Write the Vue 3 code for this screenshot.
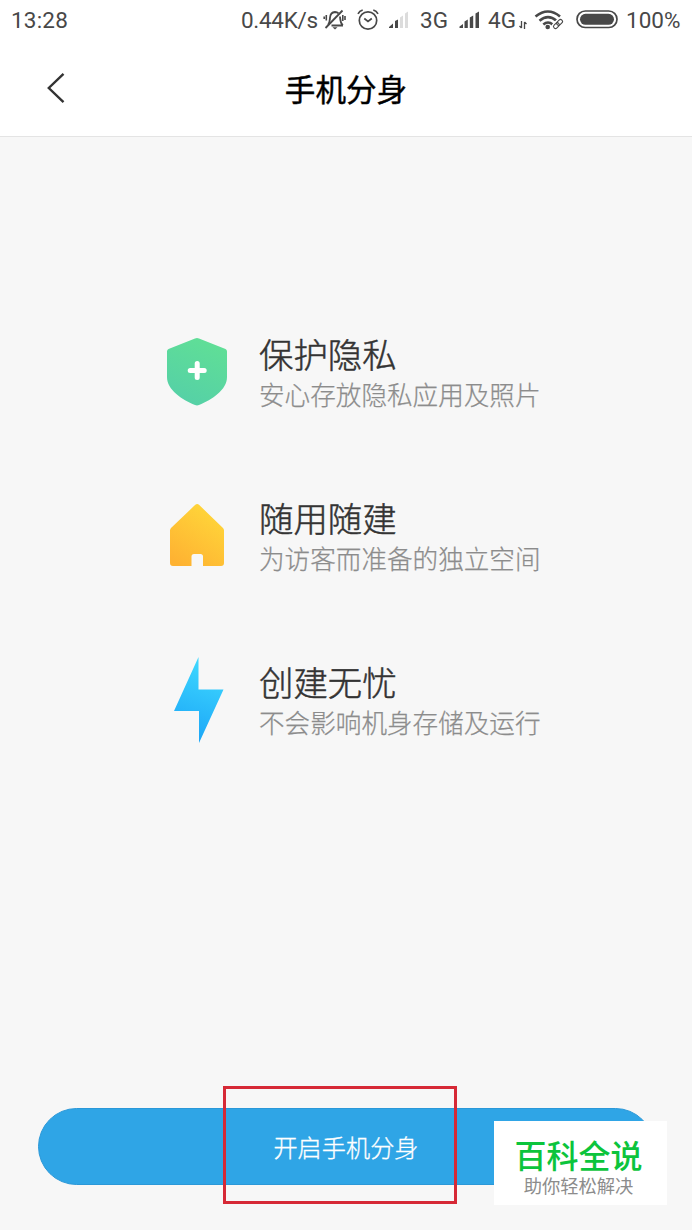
<script setup>
const features = [
  { icon: 'shield', title: '保护隐私', note: '安心存放隐私应用及照片' },
  { icon: 'house', title: '随用随建', note: '为访客而准备的独立空间' },
  { icon: 'bolt', title: '创建无忧', note: '不会影响机身存储及运行' },
]
</script>

<template>
  <main class="screen">
    <div class="status">
      <span class="clock">13:28</span>
      <span class="speed">0.44K/s</span>
      <svg class="glyph" width="24" height="22" viewBox="0 0 24 22" fill="none" stroke="#484848" stroke-width="1.8">
        <path d="M5 15.8C7 14 6.700 11 7 8.500C7.300 5.500 9 3.300 12 3c1.500 0 2.700.500 3.500 1.300M17 7.500c.3 3 0 6 2.800 8.800M8.500 16.500H20" />
        <path d="M19.500 1.500 2.500 19" />
        <path d="M3.300 6v5.500M1.200 7.500v2.500M19.800 6v6M22 7v4" stroke-width="1.600" />
        <path d="M9.500 18.300h5l-2.500 2.200z" fill="#484848" stroke="none" />
      </svg>
      <svg class="glyph" width="22" height="22" viewBox="0 0 22 22" fill="none" stroke="#484848" stroke-width="1.700">
        <circle cx="11" cy="11.500" r="8.700" />
        <path d="m7.300 9.500 3.700 3 3.800-3" />
        <path d="M1 4.800Q2.500 2 5.700 1M21 4.800Q19.500 2 16.300 1" />
      </svg>
      <svg class="glyph" width="22" height="20" viewBox="0 0 22 20">
        <path d="M1 17 5 13.500v4.500H1zM7 11l3-1.500V18H7z" fill="#484848" />
        <path d="M12 7.500 15 5.500V18h-3zM17 3.500 20 1.500V18h-3z" fill="#dcdcdc" />
      </svg>
      <span>3G</span>
      <svg class="glyph" width="22" height="20" viewBox="0 0 22 20">
        <path d="M.5 16.500 4 14v4H.5zM5.500 11.500l3.300-2V18H5.500zM10.800 7.500l3.400-2V18h-3.400zM16.500 3.500l3.500-2V18h-3.500z" fill="#484848" />
      </svg>
      <span>4G</span>
      <svg class="glyph arrows" width="8" height="8" viewBox="0 0 8 8" fill="none" stroke="#484848" stroke-width="1.300">
        <path d="M2.500 0v7M.5 5l2 2M5.500 8V1M5.500 1l2 2" />
      </svg>
      <svg class="glyph" width="30" height="22" viewBox="0 0 30 22" fill="none" stroke="#484848">
        <path d="M1.500 7.500Q14 -2.500 26 7.500M5.500 11.700Q14 4.700 22.500 11.700M9.300 15.500Q14 11.500 18.700 15.500" stroke-width="2.600" />
        <circle cx="13.700" cy="18" r="2.300" fill="#484848" stroke="none" />
        <g transform="rotate(-45 24 15)">
          <rect x="18.500" y="12.500" width="11" height="5" rx="2.500" stroke="#fff" stroke-width="3" />
          <rect x="18.500" y="13" width="6.500" height="4" rx="2" stroke-width="1.100" />
          <rect x="23" y="13" width="6.500" height="4" rx="2" stroke-width="1.100" />
        </g>
      </svg>
      <svg class="glyph" width="42" height="20" viewBox="0 0 42 20">
        <rect x="1" y="1" width="40" height="16.500" rx="8.250" fill="none" stroke="#484848" stroke-width="1.700" />
        <rect x="4" y="3.800" width="34" height="11" rx="5.500" fill="#484848" />
      </svg>
      <span class="percent">100%</span>
    </div>

    <header class="bar">
      <svg class="back" width="20" height="34" viewBox="0 0 20 34">
        <path d="M17.500 2.800 2.800 17 17.500 31.200" fill="none" stroke="#333" stroke-width="2.400" />
      </svg>
      <h1>手机分身</h1>
    </header>

    <section class="features">
      <article v-for="item in features" :key="item.icon" class="feature">
        <svg v-if="item.icon === 'shield'" class="picture" width="62" height="90" viewBox="0 0 62 90">
          <defs>
            <linearGradient id="green" x1=".7" y1="0" x2=".3" y2="1">
              <stop offset="0" stop-color="#60df96" />
              <stop offset="1" stop-color="#55d0a7" />
            </linearGradient>
          </defs>
          <path d="M29 12.600Q31 11.600 33 12.600L59.500 23Q61 23.500 61 25.500V51C61 64 46 73.500 33 79Q31 79.800 29 79C16 73.500 1 64 1 51V25.500Q1 23.500 2.500 23Z" fill="url(#green)" />
          <path d="M31.200 37.500v14M24.200 44.500h14" stroke="#fff" stroke-width="5" stroke-linecap="round" />
        </svg>
        <svg v-else-if="item.icon === 'house'" class="picture" width="62" height="90" viewBox="0 0 62 90">
          <defs>
            <linearGradient id="yellow" x1=".8" y1="0" x2=".2" y2="1">
              <stop offset="0" stop-color="#ffd83a" />
              <stop offset="1" stop-color="#feb232" />
            </linearGradient>
          </defs>
          <path d="M29.300 14.800Q31.200 13 33 14.800L57 38Q58 39 58 40.500V73Q58 76 55 76H37V66.500Q37 64 34.500 64H28Q25.500 64 25.500 66.500V76H7Q4 76 4 73V40.500Q4 39 5 38Z" fill="url(#yellow)" />
        </svg>
        <svg v-else class="picture" width="62" height="90" viewBox="0 0 62 90">
          <defs>
            <linearGradient id="blue" x1=".6" y1="0" x2=".4" y2="1">
              <stop offset="0" stop-color="#40daff" />
              <stop offset="1" stop-color="#1ba5f7" />
            </linearGradient>
          </defs>
          <path d="M32.500 3V35.500H57.500L33 89V57H8Z" fill="url(#blue)" />
        </svg>
        <div class="copy">
          <h2>{{ item.title }}</h2>
          <p>{{ item.note }}</p>
        </div>
      </article>
    </section>

    <footer class="actions">
      <button class="start">开启手机分身</button>
    </footer>
    <div class="highlight"></div>
    <aside class="stamp">
      <strong>百科全说</strong>
      <span>助你轻松解决</span>
    </aside>
  </main>
</template>

<style>
body {
  margin: 0;
}
</style>

<style scoped>
.screen {
  position: relative;
  display: flex;
  flex-direction: column;
  width: 692px;
  height: 1230px;
  overflow: hidden;
  background: #f7f7f7;
  font-family: "Liberation Sans", "Noto Sans CJK SC", sans-serif;
}
.status {
  display: grid;
  grid-template-columns: 241px 82px 34px 31px 32px 39px 29px 31px 15px 42px 50px 66px;
  align-items: center;
  height: 40px;
  background: #fff;
  color: #484848;
  font: 22.5px/40px Roboto, "Liberation Sans", sans-serif;
  white-space: nowrap;
}
.clock {
  padding-left: 11px;
  letter-spacing: 0.2px;
}
.speed {
  letter-spacing: -0.3px;
}
.glyph {
  display: block;
}
.arrows {
  margin-top: 9px;
}
.bar {
  display: grid;
  grid-template-columns: 46px 1fr 46px;
  align-items: center;
  box-sizing: border-box;
  height: 97px;
  border-bottom: 1px solid #e4e4e4;
  background: #fff;
}
.back {
  grid-column: 1 / 3;
  grid-row: 1;
  margin-left: 46px;
}
h1 {
  grid-column: 1 / 4;
  grid-row: 1;
  margin: 4px 0 0;
  color: #000;
  font-size: 30.6px;
  font-weight: 400;
  line-height: 44px;
  text-align: center;
  -webkit-text-stroke: 0.4px #000;
}
.features {
  display: flex;
  flex: 1;
  flex-direction: column;
  gap: 74px;
  padding: 189px 0 0 166px;
}
.feature {
  display: flex;
  gap: 31px;
  height: 90px;
}
.copy {
  padding-top: 8px;
  white-space: nowrap;
}
h2 {
  margin: 0;
  color: #333;
  font-size: 34.4px;
  font-weight: 300;
  line-height: 44px;
  -webkit-text-stroke: 0.5px #333;
}
p {
  margin: 0;
  color: #8c8c8c;
  font-size: 25.6px;
  font-weight: 300;
  line-height: 36px;
  -webkit-text-stroke: 0.25px #8c8c8c;
}
.actions {
  padding: 0 38px 45px;
}
.start {
  display: block;
  box-sizing: border-box;
  width: 616px;
  height: 77px;
  padding: 0 0 1px;
  border: 1px solid #2b98d8;
  border-radius: 39px;
  background: #2fa5e6;
  color: #fff;
  font-family: inherit;
  font-size: 24.2px;
  font-weight: 300;
  -webkit-text-stroke: 0.3px #fff;
}
.highlight {
  position: absolute;
  top: 1086px;
  left: 223px;
  box-sizing: border-box;
  width: 234px;
  height: 118px;
  border: 3px solid #d62936;
}
.stamp {
  position: absolute;
  top: 1121px;
  left: 494px;
  display: flex;
  flex-direction: column;
  align-items: center;
  box-sizing: border-box;
  width: 173px;
  height: 84px;
  padding: 16px 4px 0 0;
  background: #fff;
}
.stamp strong {
  color: #0cc43c;
  font-size: 32px;
  font-weight: 500;
  line-height: 40px;
}
.stamp span {
  margin-top: -1px;
  color: #8c8c8c;
  font-size: 18.3px;
  line-height: 22px;
}
</style>
